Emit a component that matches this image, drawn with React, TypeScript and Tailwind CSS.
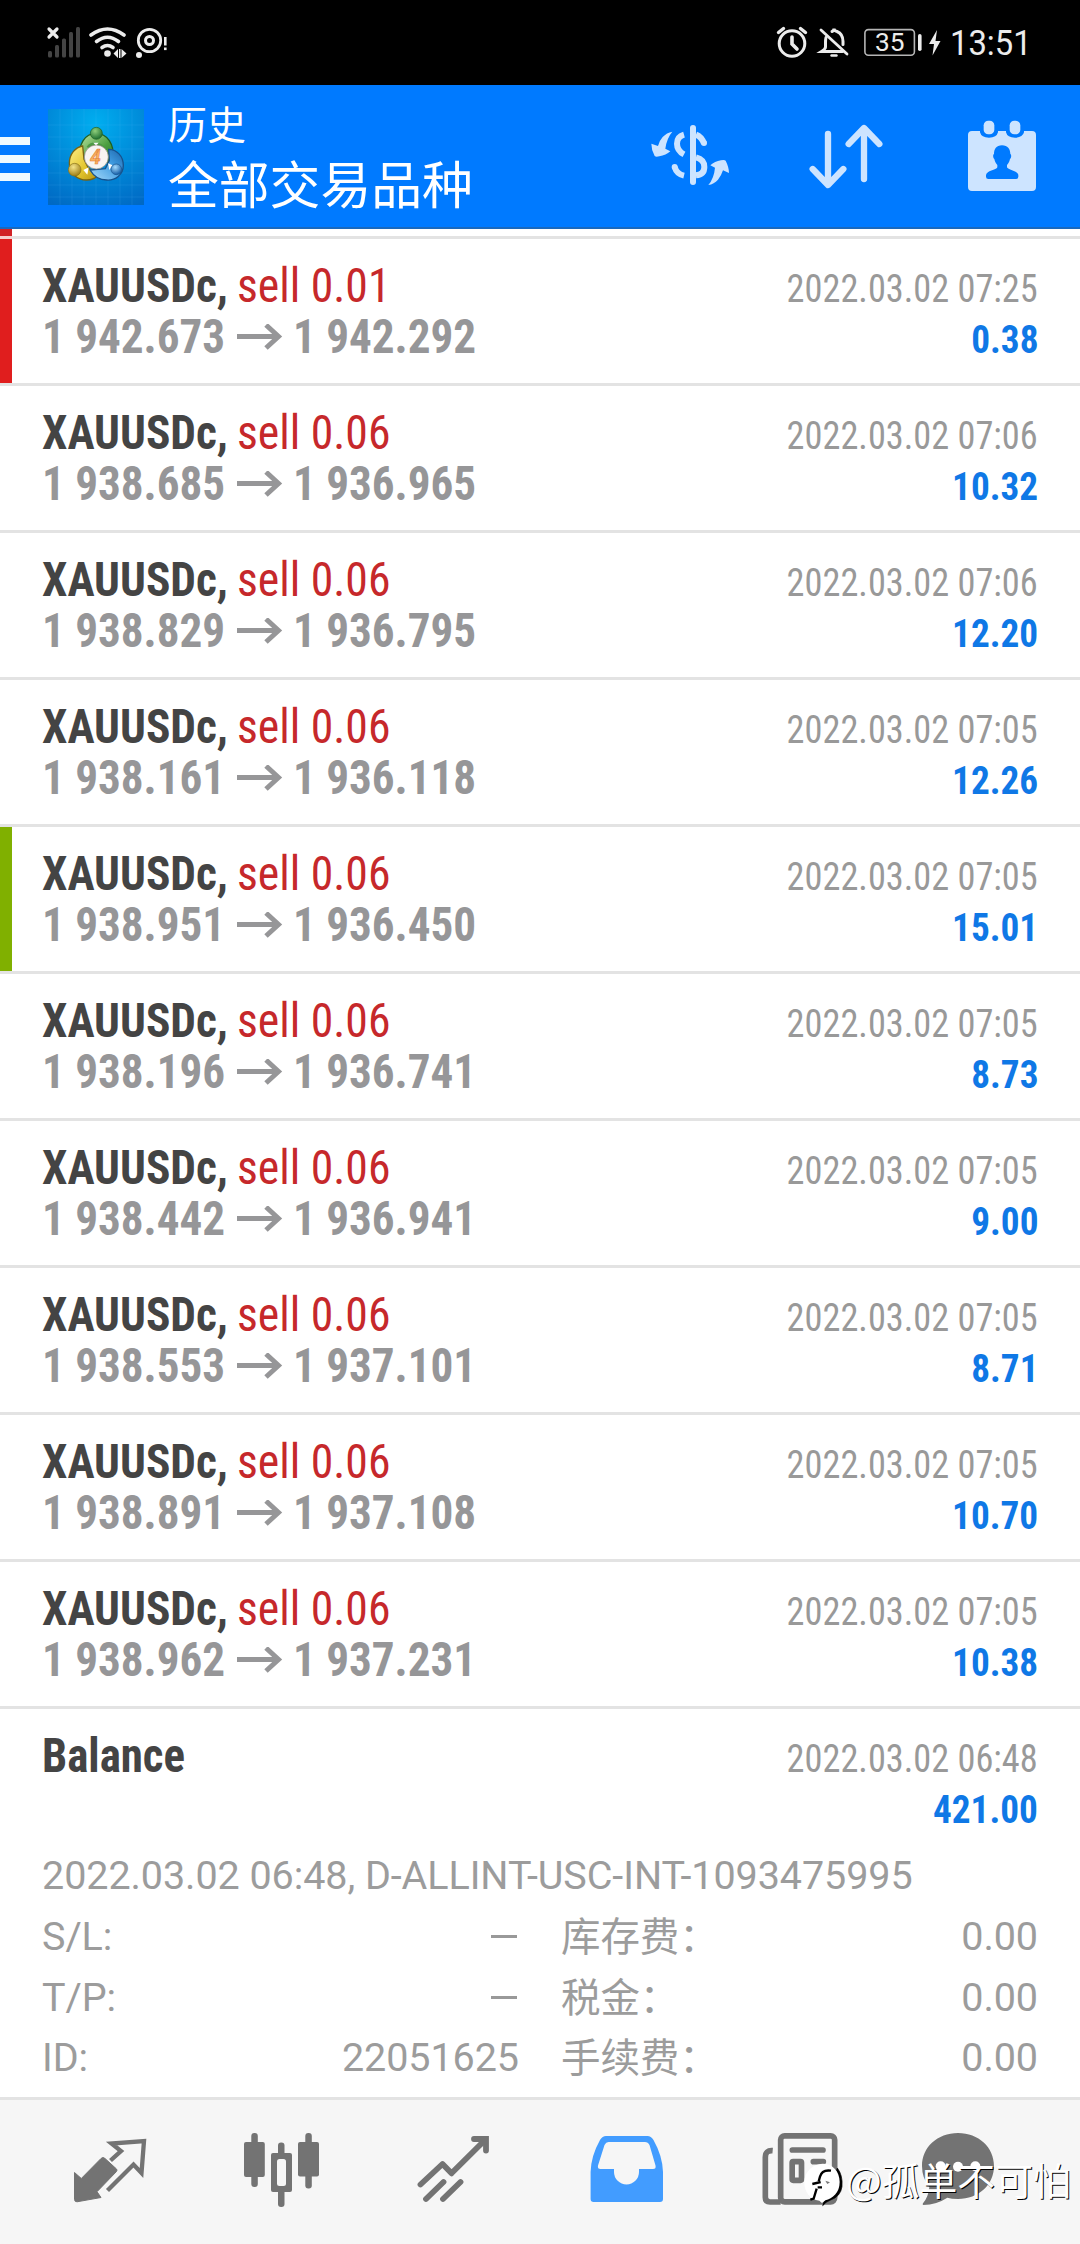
type Deal = {
  volume: string;
  open: string;
  close: string;
  time: string;
  profit: string;
  mark?: "red" | "green";
};

const deals: Deal[] = [
  { volume: "0.01", open: "1 942.673", close: "1 942.292", time: "2022.03.02 07:25", profit: "0.38", mark: "red" },
  { volume: "0.06", open: "1 938.685", close: "1 936.965", time: "2022.03.02 07:06", profit: "10.32" },
  { volume: "0.06", open: "1 938.829", close: "1 936.795", time: "2022.03.02 07:06", profit: "12.20" },
  { volume: "0.06", open: "1 938.161", close: "1 936.118", time: "2022.03.02 07:05", profit: "12.26" },
  { volume: "0.06", open: "1 938.951", close: "1 936.450", time: "2022.03.02 07:05", profit: "15.01", mark: "green" },
  { volume: "0.06", open: "1 938.196", close: "1 936.741", time: "2022.03.02 07:05", profit: "8.73" },
  { volume: "0.06", open: "1 938.442", close: "1 936.941", time: "2022.03.02 07:05", profit: "9.00" },
  { volume: "0.06", open: "1 938.553", close: "1 937.101", time: "2022.03.02 07:05", profit: "8.71" },
  { volume: "0.06", open: "1 938.891", close: "1 937.108", time: "2022.03.02 07:05", profit: "10.70" },
  { volume: "0.06", open: "1 938.962", close: "1 937.231", time: "2022.03.02 07:05", profit: "10.38" },
];

function StatusBar() {
  return (
    <div className="flex h-[85px] items-start justify-between bg-black pt-[24px] pr-[48px] pl-[44px]">
      <svg className="h-[36px] w-[130px]" viewBox="44 24 130 36" fill="none" stroke="#ececec">
        <path d="M49 29l8 8M57 29l-8 8" strokeWidth="3.2" strokeLinecap="round" />
        <g fill="#444" stroke="none">
          <rect x="48" y="51" width="4" height="6.5" rx="1.5" />
          <rect x="55" y="45" width="4" height="12.5" rx="1.5" />
          <rect x="62" y="38.5" width="4" height="19" rx="1.5" />
          <rect x="69" y="32" width="4" height="25.5" rx="1.5" />
          <rect x="76" y="27" width="4" height="30.5" rx="1.5" />
        </g>
        <g strokeWidth="3.6" strokeLinecap="round">
          <path d="M91 35Q107.500 23 124 35" />
          <path d="M96.500 41.500Q107.500 33 118.500 41.500" />
          <path d="M102 47.500Q107.500 43.500 113 47.500" />
        </g>
        <g fill="#ececec" stroke="none">
          <circle cx="107.500" cy="53.500" r="3.300" />
          <path d="M113.500 53.500l4.500-4.500v9zM119 49h1.500v9H119zM121.500 49l5 4.500-5 4.500z" />
          <circle cx="139" cy="55" r="3" />
          <rect x="164" y="37" width="2.600" height="8.500" />
          <rect x="164" y="47.500" width="2.600" height="2.600" />
        </g>
        <circle cx="149.500" cy="40.500" r="11.200" strokeWidth="2.800" />
        <circle cx="149.500" cy="40.500" r="4" strokeWidth="3" />
      </svg>
      <div className="flex">
        <svg className="h-[36px] w-[170px]" viewBox="774 24 170 36" fill="none" stroke="#ececec">
          <g strokeWidth="3" strokeLinecap="round">
            <circle cx="792" cy="43.500" r="12.800" />
            <path d="M792 37v7l5 5" strokeWidth="3.600" />
            <path d="M778.500 32.500l5-4M805.500 32.500l-5-4" strokeWidth="3.400" />
            <path d="M821 30l26 24" strokeWidth="2.800" />
            <path d="M826 37.500q-.500 2-.500 5v4.500q0 2-4 4.500h21" strokeWidth="3" />
            <path d="M832 31.500q2-.700 2-3 0 2.300 3 3 6 2.500 6 10v3" strokeWidth="3" />
            <path d="M831.500 55.500h5" strokeWidth="2.400" />
          </g>
          <rect x="864.900" y="29.600" width="49.500" height="25.600" rx="3.500" stroke="#b5b5b5" strokeWidth="1.600" />
          <rect x="918" y="34" width="3.600" height="17" rx="1.800" fill="#ececec" stroke="none" />
          <path d="M937 30l-8 14h5l-1.500 11.500 8-14.500h-5z" fill="#ececec" stroke="none" />
          <text x="875" y="51.300" fontSize="26.500" fill="#ececec" stroke="none" fontFamily="Roboto" textLength="29.500" lengthAdjust="spacingAndGlyphs">
            35
          </text>
        </svg>
        <span className="mt-[-6px] ml-[6px] inline-block w-[82px] origin-left scale-x-[0.95] font-['Roboto'] text-[34.5px] leading-[50px] whitespace-nowrap text-[#ececec]">
          13:51
        </span>
      </div>
    </div>
  );
}

function Logo() {
  return (
    <svg className="ml-[18px] h-[96px] w-[96px]" viewBox="24 27 288 288">
      <defs>
        <radialGradient id="sky" cx="0.5" cy="0.15" r="0.95">
          <stop offset="0" stopColor="#00aef0" />
          <stop offset="0.45" stopColor="#008fdc" />
          <stop offset="1" stopColor="#0069c4" />
        </radialGradient>
        <linearGradient id="leaf" x1="0" y1="0" x2="1" y2="1">
          <stop offset="0" stopColor="#bfe5a5" />
          <stop offset="0.6" stopColor="#4b9e3f" />
          <stop offset="1" stopColor="#2a7a2c" />
        </linearGradient>
        <linearGradient id="gold" x1="0" y1="0" x2="1" y2="1">
          <stop offset="0" stopColor="#fff08a" />
          <stop offset="0.6" stopColor="#e2c42c" />
          <stop offset="1" stopColor="#b79413" />
        </linearGradient>
        <linearGradient id="sea" x1="0" y1="1" x2="1" y2="0">
          <stop offset="0" stopColor="#a9dcfb" />
          <stop offset="0.6" stopColor="#3f9be0" />
          <stop offset="1" stopColor="#1c63a8" />
        </linearGradient>
        <radialGradient id="ballGreen" cx="0.4" cy="0.3" r="0.7">
          <stop offset="0" stopColor="#8fcf7c" />
          <stop offset="1" stopColor="#1f7030" />
        </radialGradient>
        <radialGradient id="ballGold" cx="0.4" cy="0.3" r="0.7">
          <stop offset="0" stopColor="#f4e48a" />
          <stop offset="1" stopColor="#a08018" />
        </radialGradient>
        <radialGradient id="ballBlue" cx="0.4" cy="0.3" r="0.7">
          <stop offset="0" stopColor="#a5dcff" />
          <stop offset="1" stopColor="#155da6" />
        </radialGradient>
      </defs>
      <rect x="24" y="27" width="288" height="288" fill="url(#sky)" />
      <path
        d="M60 27v288M96 27v288M132 27v288M168 27v288M204 27v288M240 27v288M276 27v288M24 75h288M24 111h288M24 147h288M24 183h288M24 219h288M24 255h288M24 291h288"
        stroke="#5cc4ff"
        strokeOpacity="0.13"
        strokeWidth="3"
      />
      <path d="M120 172c-5-38 14-72 48-72s56 34 50 72l-14 16-36-40-40 20z" fill="url(#leaf)" stroke="#1f5f22" strokeWidth="4" />
      <path d="M128 138c-22 4-40 24-40 52 0 30 24 50 52 50 14 0 24-4 32-12l-28-26-12-24z" fill="url(#gold)" stroke="#7a6412" strokeWidth="4" />
      <path d="M206 148c24 0 44 20 44 48s-24 46-50 44c-20 0-38-10-50-30l46-4 12-24z" fill="url(#sea)" stroke="#17528c" strokeWidth="4" />
      <path d="M140 140q10-14 28-12 20 0 30 18l-10 4q-20-14-40-4z" fill="#4d9a44" />
      <path d="M130 210l16-8-4 22zM204 190l14 6-10 14zM160 128l16 0-8 9z" fill="#fff" />
      <circle cx="169" cy="100" r="18" fill="url(#ballGreen)" stroke="#1f5f22" strokeWidth="2" />
      <circle cx="104" cy="209" r="19" fill="url(#ballGold)" stroke="#8a7218" strokeWidth="2" />
      <circle cx="229" cy="208" r="16" fill="url(#ballBlue)" stroke="#17528c" strokeWidth="2" />
      <circle cx="169" cy="171" r="36" fill="#f8f4f2" stroke="#8a8378" strokeWidth="2" />
      <text x="166" y="191" textAnchor="middle" fontFamily="Roboto" fontStyle="italic" fontWeight="700" fontSize="58" fill="#fbb25c" stroke="#e07a3c" strokeWidth="1.500">
        4
      </text>
    </svg>
  );
}

function Header() {
  return (
    <header className="flex h-[144px] items-start border-b-2 border-[#1a69bd] bg-[#007aff]">
      <div className="mt-[52px] flex w-[30px] flex-col gap-[10px]">
        <div className="h-[8px] bg-[#eefaff]" />
        <div className="h-[8px] bg-[#eefaff]" />
        <div className="h-[8px] bg-[#eefaff]" />
      </div>
      <div className="mt-[24px]">
        <Logo />
      </div>
      <div className="mt-[8px] ml-[24px] flex-1 font-['Noto_Sans_CJK_SC',sans-serif] whitespace-nowrap text-white">
        <div className="text-[39px] leading-[58px]">历史</div>
        <div className="text-[50.8px] leading-[62px]">全部交易品种</div>
      </div>
      <div className="mt-[35px] mr-[42px] flex">
        <svg className="h-[70px] w-[80px]" viewBox="30 30 240 210" fill="none" stroke="#cde4ff">
          <path d="M159 54v162" strokeWidth="18" strokeLinecap="round" />
          <path d="M132 74Q111 80 111 101T132 133" strokeWidth="18" />
          <path d="M168 74Q184 80 192 100" strokeWidth="18" />
          <circle cx="192" cy="99" r="9" fill="#cde4ff" stroke="none" />
          <path d="M168 142Q193 148 193 171T168 196" strokeWidth="18" />
          <path d="M104 171Q110 192 132 197" strokeWidth="18" />
          <circle cx="104" cy="171" r="9" fill="#cde4ff" stroke="none" />
          <g fill="#cde4ff" stroke="none">
            <path d="M97 65Q80 68 68 81Q58 92 54 108L34 101Q34 120 44 138Q48 142 58 139Q78 136 91 124L76 116Q80 85 97 65Z" />
            <path d="M205 225Q222 222 234 209Q244 197 249 181L267 189Q267 172 257 152Q253 148 243 151Q224 154 211 166L225 173Q222 205 205 225Z" />
          </g>
        </svg>
        <svg className="ml-[78px] h-[70px] w-[76px]" viewBox="504 30 228 210" fill="none" stroke="#cde4ff" strokeWidth="19" strokeLinecap="round" strokeLinejoin="round">
          <path d="M564 72v152M518 177l46 48 46-48" />
          <path d="M672 207V55M626 102l46-48 46 48" />
        </svg>
        <svg className="ml-[82px] h-[72px] w-[72px]" viewBox="978 30 216 216">
          <path
            d="M996 63h24v4q4 16 27 16t27-16v-4h24v4q4 16 27 16t27-16v-4h24q12 0 12 12v156q0 12-12 12H996q-12 0-12-12V75q0-12 12-12z"
            fill="#cde4ff"
          />
          <rect x="1031" y="32" width="32" height="41" rx="14" fill="#cde4ff" />
          <rect x="1109" y="32" width="32" height="41" rx="14" fill="#cde4ff" />
          <path
            d="M1086 106c17 0 25 12 25 26 4 2 3 12-1 15-2 10-6 15-9 18v7c2 8 34 10 34 24v4q0 7-7 7h-83q-7 0-7-7v-4c0-14 32-16 34-24v-7c-3-3-7-8-9-18-4-3-5-13-1-15 0-14 7-26 24-26z"
            fill="#007aff"
          />
        </svg>
      </div>
    </header>
  );
}

const wideLine = "inline-block origin-left whitespace-pre";

function DealRow({ deal }: { deal: Deal }) {
  return (
    <div className="flex h-[147px] border-b-3 border-[#e3e3e3] bg-white font-['Roboto'] font-stretch-75%">
      {deal.mark === "red" && <div className="-mr-[12px] w-[12px] bg-[#e01e1e]" />}
      {deal.mark === "green" && <div className="-mr-[12px] w-[12px] bg-[#80b000]" />}
      <div className="flex flex-1 justify-between pr-[42px] pl-[42px]">
        <div className="pt-[21px] text-[48px] leading-[51px]">
          <div className="flex h-[51px]">
            <span className={wideLine + " w-[195px] scale-x-[0.945] font-bold text-[#444]"}>XAUUSDc,</span>
            <span className={wideLine + " w-[165px] scale-x-[0.952] text-[#c6282b]"}>sell {deal.volume}</span>
          </div>
          <div className="flex h-[51px] items-start text-[#969698]">
            <span className={wideLine + " w-[195px] scale-x-[0.94] font-bold"}>{deal.open}</span>
            <svg className="mt-[13px] h-[26px] w-[46px]" viewBox="0 0 46 26" fill="none" stroke="#969698" strokeWidth="5">
              <path d="M0 12.500h42" />
              <path d="M29 1l12.500 11.500L29 24" />
            </svg>
            <span className={wideLine + " ml-[10px] w-[195px] scale-x-[0.94] font-bold"}>{deal.close}</span>
          </div>
        </div>
        <RightColumn time={deal.time} profit={deal.profit} />
      </div>
    </div>
  );
}

function RightColumn({ time, profit }: { time: string; profit: string }) {
  return (
    <div className="flex flex-col items-end pt-[25px] text-[39px] leading-[51px] whitespace-nowrap">
      <span className="origin-right scale-x-[0.931] text-[#999]">{time}</span>
      <span className="origin-right scale-x-[0.955] font-bold text-[#0f78e6]">{profit}</span>
    </div>
  );
}

const details = [
  ["S/L:", "–", "库存费：", "0.00"],
  ["T/P:", "–", "税金：", "0.00"],
  ["ID:", "22051625", "手续费：", "0.00"],
];

function BalanceEntry() {
  return (
    <div className="flex-1 px-[42px] font-['Roboto','Noto_Sans_CJK_SC',sans-serif]">
      <div className="flex h-[136px] justify-between font-stretch-75%">
        <div className="pt-[21px] text-[48px] leading-[51px]">
          <span className={wideLine + " scale-x-[0.935] font-bold text-[#444]"}>Balance</span>
        </div>
        <RightColumn time="2022.03.02 06:48" profit="421.00" />
      </div>
      <div className="text-[39.5px] leading-[61px] tracking-[-0.07px] whitespace-nowrap text-[#9c9c9c]">
        <div>2022.03.02 06:48, D-ALLINT-USC-INT-1093475995</div>
        {details.map(([label, value, fee, amount]) => (
          <div key={label} className="flex h-[60.7px]">
            <span className="w-[236px]">{label}</span>
            {value === "–" ? (
              <span className="flex w-[241px] justify-end pr-[2px]">
                <span className="mt-[29px] h-[3px] w-[26px] bg-[#999]" />
              </span>
            ) : (
              <span className="w-[241px] text-right">{value}</span>
            )}
            <span className="-mt-[3px] ml-[42px] flex-1 font-['Noto_Sans_CJK_SC',sans-serif] text-[39.5px]">{fee}</span>
            <span>{amount}</span>
          </div>
        ))}
      </div>
    </div>
  );
}

function BottomNav() {
  return (
    <nav className="flex h-[147px] border-t-3 border-[#e3e3e3] bg-[#f6f6f6] px-[24px]">
      <svg className="h-[144px] w-[172px]" viewBox="24 20 172 144" fill="none" stroke="#737373">
        <path d="M110.500 80.500l10.500-9.500-9.500-7.500L144 61l-2.500 32-8-8.500-26 26" strokeWidth="4.300" />
        <path
          d="M74.500 92.500l6.800 6L101 78.500q2-2 4 0L116.500 89q1 1 0 2.500L97 111.700l4 5.800L77 121.800q-2.500 0-2.500-2.500z"
          fill="#737373"
          strokeWidth="1"
          strokeLinejoin="round"
        />
      </svg>
      <svg className="h-[144px] w-[172px]" viewBox="196 20 172 144" fill="#737373">
        <rect x="251.300" y="53" width="6.500" height="54" rx="3" />
        <rect x="244" y="62" width="20.800" height="35" rx="2" />
        <rect x="278" y="62.500" width="6.500" height="64.500" rx="3" />
        <rect x="271" y="73" width="21" height="39" rx="2" />
        <rect x="277" y="79" width="9" height="27" rx="2.500" fill="#f6f6f6" />
        <rect x="305.300" y="53" width="6.500" height="55.500" rx="3" />
        <rect x="298" y="62" width="21" height="34.500" rx="2" />
      </svg>
      <svg className="h-[144px] w-[172px]" viewBox="368 20 172 144" fill="none" stroke="#737373" strokeWidth="5.800" strokeLinecap="round">
        <path d="M420.500 104.500L442.500 84l9 9.300L485 60" strokeLinejoin="round" />
        <path d="M474 59h12v11.500" />
        <path d="M426 119l17.500-17M443 119l17.500-17" />
      </svg>
      <svg className="h-[144px] w-[172px]" viewBox="540 20 172 144">
        <path
          fillRule="evenodd"
          fill="#429cff"
          d="M590.600 119V92Q591 76 600 60Q602.500 56 606 56H647.500Q651 56 653.500 60Q662.500 76 663 92V119Q663 122 660 122H593.600Q590.600 122 590.600 119ZM608.500 62Q606 62 604.500 65L598 85.500Q597.300 89 600.500 89H614V92A12.500 12.500 0 0 0 639 92V89H653Q656.300 89 655.500 85.500L649.500 65Q648 62 645 62Z"
        />
      </svg>
      <svg className="h-[144px] w-[172px]" viewBox="712 20 172 144">
        <g transform="translate(750 30) scale(0.33333)" fill="none" stroke="#737373" strokeWidth="17">
          <path d="M68 122Q46 120 46 142V262Q46 276 60 276H92" />
          <rect x="92" y="77.500" width="162" height="198" rx="12" />
          <path d="M127 120h92" strokeLinecap="round" />
          <path d="M190 155h30M190 190h30M190 215h30" strokeLinecap="round" />
          <rect x="126.500" y="155" width="28" height="56" rx="3" />
        </g>
      </svg>
      <svg className="h-[144px] w-[172px]" viewBox="884 20 172 144">
        <g transform="translate(750 30) scale(0.33333)">
          <path
            d="M624 69C686 69 732 112 732 168S686 267 624 267Q604 267 592 263Q560 284 520 285Q516 284 519 280Q535 262 538 232Q516 204 516 168C516 112 562 69 624 69Z"
            fill="#737373"
          />
          <g fill="#fff">
            <circle cx="572" cy="169" r="15" />
            <circle cx="624" cy="170" r="15" />
            <circle cx="676" cy="169" r="15" />
          </g>
        </g>
      </svg>
    </nav>
  );
}

function Watermark() {
  return (
    <div className="absolute top-[2155px] left-[803px] flex items-start">
      <svg className="mt-[8px] h-[46px] w-[42px]" viewBox="159 163 126 138">
        <path d="M262 178Q279 200 276 234Q272 264 240 275Q226 280 218 291Q220 278 230 272Z" fill="#000" stroke="#000" strokeWidth="2" />
        <path d="M218 165C248 165 269 188 269 220S248 270 226 275L216 283L208 276C180 274 163 250 163 220S188 165 218 165Z" fill="#fff" />
        <path d="M243 186Q216 182 210 204L206 218M187 226L212 220M203 236L216 236M200 240L191 270L181 273" fill="none" stroke="#000" strokeWidth="7" />
        <path d="M226 216L240 221L232 226Z" fill="#777" />
      </svg>
      <span className="ml-[1px] font-['Noto_Sans_CJK_SC',sans-serif] text-[37.8px] leading-[48px] font-normal whitespace-nowrap text-white [text-shadow:1px_1px_0_#000]">
        @孤单不可怕
      </span>
    </div>
  );
}

export default function App() {
  return (
    <div className="relative flex h-[2244px] w-[1080px] flex-col overflow-hidden bg-white">
      <StatusBar />
      <Header />
      <div className="flex h-[10px] flex-col">
        <div className="h-[7px] w-[12px] bg-[#d12226]" />
        <div className="flex h-[3px] bg-[#e3e3e3]">
          <div className="w-[12px] bg-[#f6cfcf]" />
        </div>
      </div>
      {deals.map((deal) => (
        <DealRow key={deal.open} deal={deal} />
      ))}
      <BalanceEntry />
      <BottomNav />
      <Watermark />
    </div>
  );
}
